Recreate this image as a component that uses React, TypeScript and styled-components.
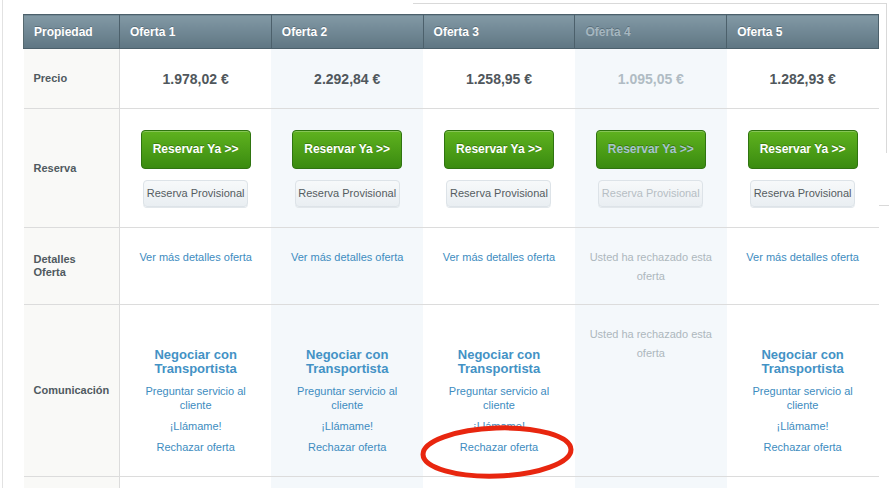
import styled, { createGlobalStyle } from 'styled-components';

type Offer = {
    readonly name: string;
    readonly price: string;
    readonly rejected?: boolean;
};

const offers: Offer[] = [
    { name: 'Oferta 1', price: '1.978,02 €' },
    { name: 'Oferta 2', price: '2.292,84 €' },
    { name: 'Oferta 3', price: '1.258,95 €' },
    { name: 'Oferta 4', price: '1.095,05 €', rejected: true },
    { name: 'Oferta 5', price: '1.282,93 €' },
];

const GlobalStyle = createGlobalStyle`
    html, body {
        margin: 0;
        padding: 0;
        background: #fff;
        font-family: "Liberation Sans", Arial, Helvetica, sans-serif;
    }
`;

const Page = styled.div`
    position: relative;
    width: 887px;
    height: 488px;
    overflow: hidden;
    box-sizing: border-box;
    padding: 14px 0 0 20px;
    border-left: 1px solid #e2e2e2;
    margin-left: 2px;
`;

const BackPanel = styled.div`
    position: absolute;
    top: 3px;
    left: 410px;
    width: 473px;
    height: 149px;
    border-top: 1px solid #d9d9d9;
    border-right: 1px solid #d9d9d9;
`;

const BackLine = styled.div`
    position: absolute;
    top: 205px;
    left: 873px;
    width: 20px;
    border-top: 1px solid #d9d9d9;
`;

const Table = styled.table`
    position: relative;
    border-collapse: collapse;
    border-spacing: 0;
    table-layout: fixed;
    width: 856px;
    background: #fff;
    font-size: 11px;
    color: #505a60;
`;

const HeadCell = styled.th<{ $muted?: boolean }>`
    height: 34px;
    padding: 0 10px;
    box-sizing: border-box;
    text-align: left;
    font-size: 12px;
    font-weight: bold;
    color: ${(p) => (p.$muted ? '#a6b7c0' : '#fff')};
    text-shadow: 0 -1px 0 rgba(40, 55, 65, 0.35);
    background: linear-gradient(#8299a5, #5f7683);
    border: 1px solid #4c606b;
    border-left-color: #56696f;
`;

const Row = styled.tr<{ $height: number }>`
    height: ${(p) => p.$height}px;
    & > td {
        border-bottom: 1px solid #dcdcdc;
    }
`;

const LabelCell = styled.td`
    width: 96px;
    box-sizing: border-box;
    padding: 0 10px;
    background: #f9f9f7;
    border-right: 1px solid #dcdcdc;
    font-weight: bold;
    font-size: 11px;
    line-height: 13px;
    color: #505a60;
    vertical-align: middle;
`;

const OfferCell = styled.td<{ $shaded: boolean; $top?: number }>`
    width: 152px;
    box-sizing: border-box;
    padding: ${(p) => (p.$top !== undefined ? `${p.$top}px 8px 0` : '0 8px')};
    background: ${(p) => (p.$shaded ? '#f4f8fb' : '#fff')};
    text-align: center;
    vertical-align: ${(p) => (p.$top !== undefined ? 'top' : 'middle')};
`;

const Price = styled.span<{ $muted?: boolean }>`
    font-size: 14px;
    font-weight: bold;
    color: ${(p) => (p.$muted ? '#b0bcc4' : '#50575c')};
`;

const BookingStack = styled.div`
    display: flex;
    flex-direction: column;
    align-items: center;
    gap: 11px;
`;

const BookButton = styled.button<{ $muted?: boolean }>`
    width: 110px;
    height: 39px;
    padding: 0;
    border: 1px solid #2f7410;
    border-radius: 4px;
    background: linear-gradient(#5fb21f, #3a8b10);
    box-shadow: inset 0 1px 0 rgba(255, 255, 255, 0.25);
    font-family: inherit;
    font-size: 12px;
    font-weight: bold;
    white-space: nowrap;
    color: ${(p) => (p.$muted ? '#a8c3cf' : '#fff')};
    text-shadow: 0 -1px 0 rgba(20, 60, 0, 0.4);
    cursor: pointer;
`;

const ProvisionalButton = styled.button<{ $muted?: boolean }>`
    width: 105px;
    height: 27px;
    padding: 0;
    border: 1px solid #dde3e8;
    border-radius: 4px;
    background: linear-gradient(#f7f9fa, #e9eef2);
    box-shadow: 0 1px 0 #e2e7eb;
    font-family: inherit;
    font-size: 11px;
    white-space: nowrap;
    color: ${(p) => (p.$muted ? '#b6bec4' : '#555c61')};
    cursor: pointer;
`;

const Link = styled.a`
    display: block;
    max-width: 118px;
    font-size: 11px;
    line-height: 14px;
    color: #3d8cc0;
    text-decoration: none;
    cursor: pointer;
`;

const DetailLink = styled(Link)`
    max-width: none;
    line-height: 19px;
`;

const Rejected = styled.div`
    font-size: 11px;
    line-height: 19px;
    color: #adb7bd;
`;

const Contact = styled.div`
    display: flex;
    flex-direction: column;
    align-items: center;
    gap: 7px;
`;

const ContactTitle = styled(Link)`
    font-size: 13px;
    font-weight: bold;
    color: #4392c5;
    margin-bottom: 1px;
`;

const Annotation = styled.svg`
    position: absolute;
    left: 416px;
    top: 424px;
    pointer-events: none;
`;

export default function App() {
    return (
        <>
            <GlobalStyle />
            <Page>
                <BackPanel />
                <BackLine />
                <Table>
                    <thead>
                        <tr>
                            <HeadCell style={{ width: 96 }}>Propiedad</HeadCell>
                            {offers.map((o) => (
                                <HeadCell key={o.name} $muted={o.rejected}>
                                    {o.name}
                                </HeadCell>
                            ))}
                        </tr>
                    </thead>
                    <tbody>
                        <Row $height={60}>
                            <LabelCell>Precio</LabelCell>
                            {offers.map((o, i) => (
                                <OfferCell key={o.name} $shaded={i % 2 === 1}>
                                    <Price $muted={o.rejected}>{o.price}</Price>
                                </OfferCell>
                            ))}
                        </Row>
                        <Row $height={119}>
                            <LabelCell>Reserva</LabelCell>
                            {offers.map((o, i) => (
                                <OfferCell key={o.name} $shaded={i % 2 === 1}>
                                    <BookingStack>
                                        <BookButton $muted={o.rejected}>Reservar Ya &gt;&gt;</BookButton>
                                        <ProvisionalButton $muted={o.rejected}>
                                            Reserva Provisional
                                        </ProvisionalButton>
                                    </BookingStack>
                                </OfferCell>
                            ))}
                        </Row>
                        <Row $height={77}>
                            <LabelCell>
                                Detalles
                                <br />
                                Oferta
                            </LabelCell>
                            {offers.map((o, i) => (
                                <OfferCell key={o.name} $shaded={i % 2 === 1} $top={20}>
                                    {o.rejected ? (
                                        <Rejected>Usted ha rechazado esta oferta</Rejected>
                                    ) : (
                                        <DetailLink>Ver más detalles oferta</DetailLink>
                                    )}
                                </OfferCell>
                            ))}
                        </Row>
                        <Row $height={172}>
                            <LabelCell>Comunicación</LabelCell>
                            {offers.map((o, i) =>
                                o.rejected ? (
                                    <OfferCell key={o.name} $shaded={i % 2 === 1} $top={20}>
                                        <Rejected>Usted ha rechazado esta oferta</Rejected>
                                    </OfferCell>
                                ) : (
                                    <OfferCell key={o.name} $shaded={i % 2 === 1} $top={43}>
                                        <Contact>
                                            <ContactTitle>
                                                Negociar con
                                                <br />
                                                Transportista
                                            </ContactTitle>
                                            <Link>Preguntar servicio al cliente</Link>
                                            <Link>¡Llámame!</Link>
                                            <Link>Rechazar oferta</Link>
                                        </Contact>
                                    </OfferCell>
                                ),
                            )}
                        </Row>
                        <Row $height={40}>
                            <LabelCell />
                            {offers.map((o, i) => (
                                <OfferCell key={o.name} $shaded={i % 2 === 1} />
                            ))}
                        </Row>
                    </tbody>
                </Table>
                <Annotation width="160" height="58" viewBox="0 0 160 58">
                    <ellipse
                        cx="78"
                        cy="28"
                        rx="74"
                        ry="24"
                        fill="none"
                        stroke="#e8260f"
                        strokeWidth="5"
                        transform="rotate(-2 78 28)"
                    />
                </Annotation>
            </Page>
        </>
    );
}
